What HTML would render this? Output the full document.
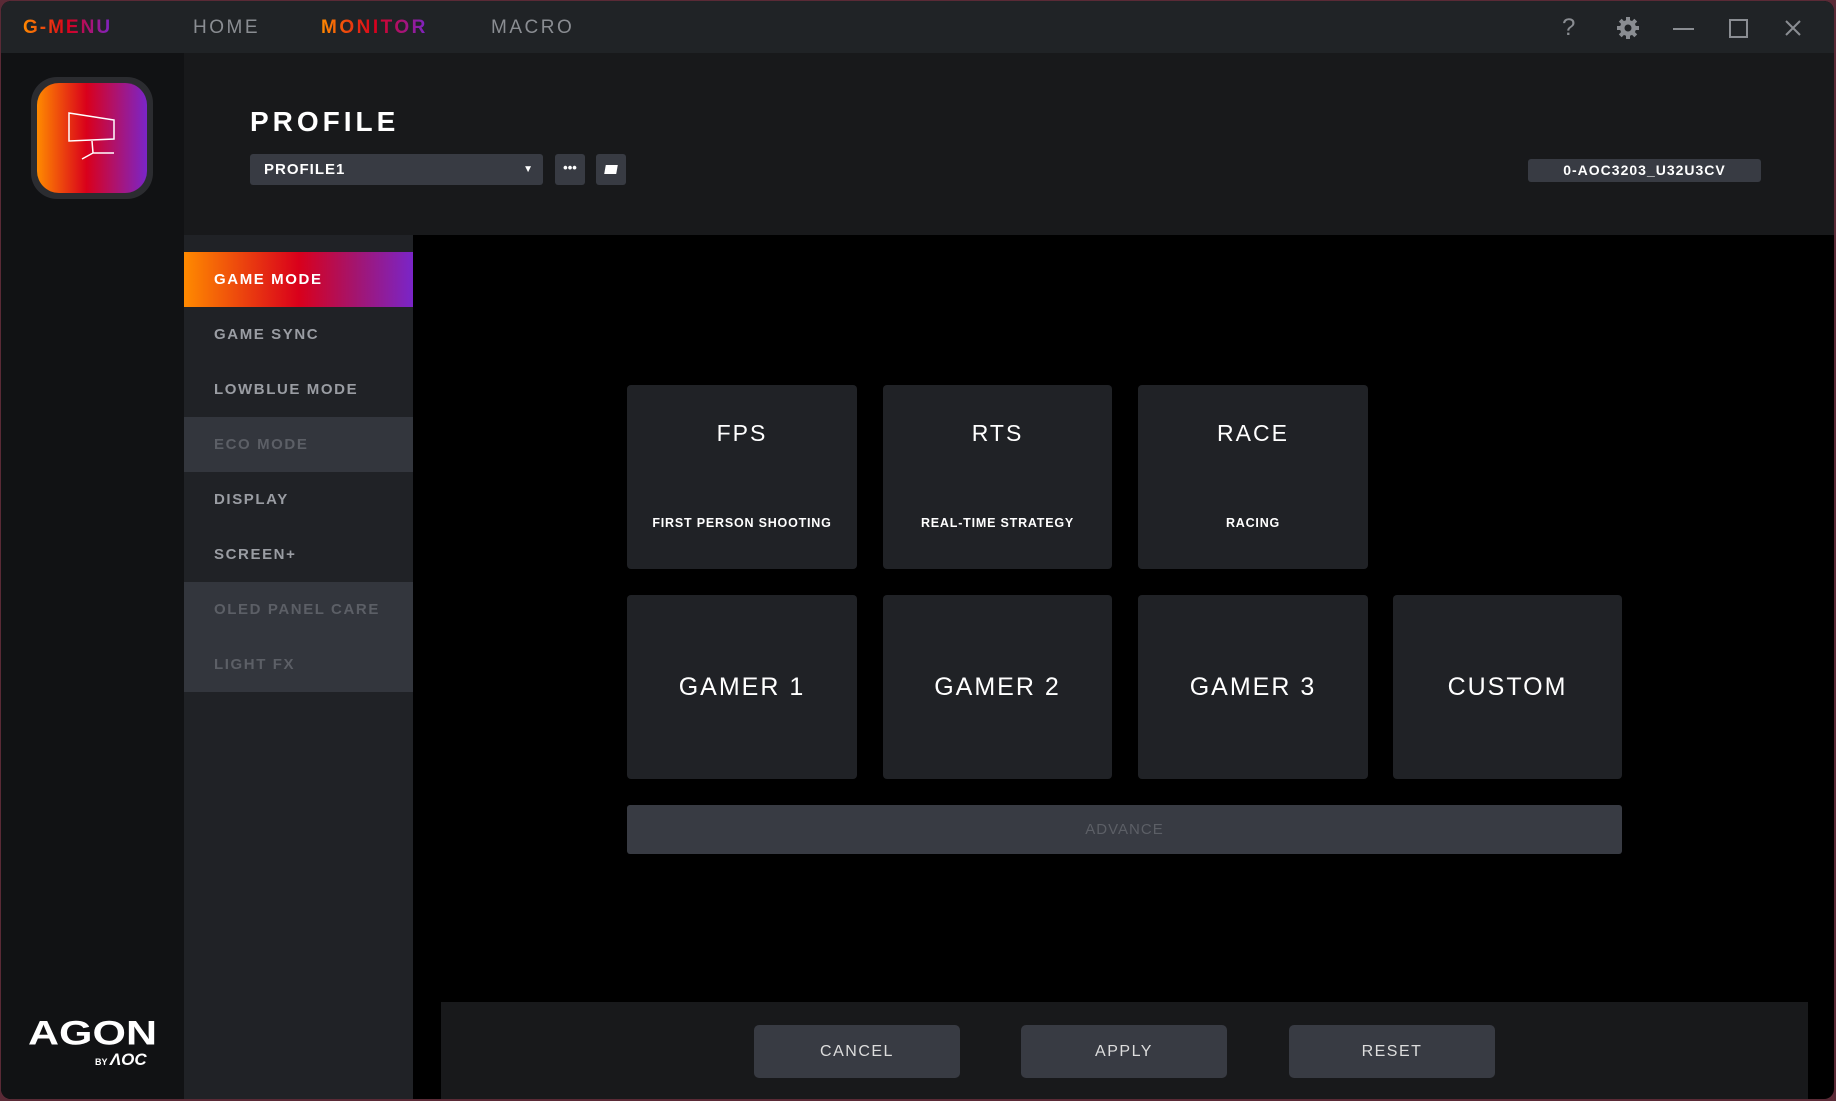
<!DOCTYPE html>
<html><head><meta charset="utf-8"><style>
*{margin:0;padding:0;box-sizing:border-box}
body{width:1836px;height:1101px;background:#5a2a36;overflow:hidden;font-family:"Liberation Sans",sans-serif}
.win{position:absolute;left:1px;top:1px;width:1833px;height:1098px;background:#000;border-radius:10px;overflow:hidden}
.abs{position:absolute}
.title{left:0;top:0;width:1836px;height:52px;background:#202326}
.nav{top:16px;font-size:19px;letter-spacing:2.5px;color:#8a8d92}
.grad{background:linear-gradient(90deg,#ff8a00,#d9001b 50%,#7a25c8);-webkit-background-clip:text;background-clip:text;color:transparent;font-weight:bold}
.side{left:0;top:52px;width:183px;height:1050px;background:#111214}
.hdr{left:183px;top:52px;width:1654px;height:182px;background:#18191b}
.menu{left:183px;top:234px;width:229px;height:870px;background:#202226}
.item{position:absolute;left:0;width:229px;height:55px;line-height:55px;padding-left:30px;font-size:15px;font-weight:bold;letter-spacing:1.6px;color:#9a9da3}
.dis{background:#33363d;color:#5c5f66}
.card{position:absolute;background:#202226;border-radius:4px;color:#fff;text-align:center}
.ct{position:absolute;left:0;right:0;top:35px;font-size:23px;letter-spacing:2px}
.cs{position:absolute;left:0;right:0;top:131px;font-size:12.5px;font-weight:bold;letter-spacing:0.8px}
.cg{line-height:184px;font-size:25px;letter-spacing:2px}
.btn{position:absolute;top:1024px;width:206px;height:53px;background:#383b43;border-radius:5px;color:#ddd;font-size:16px;letter-spacing:1.5px;text-align:center;line-height:53px}
</style></head><body><div class="win">
<div class="abs title"></div>
<div class="abs nav grad" style="left:22px;letter-spacing:2px">G-MENU</div>
<div class="abs nav" style="left:192px">HOME</div>
<div class="abs nav grad" style="left:320px">MONITOR</div>
<div class="abs nav" style="left:490px">MACRO</div>
<div class="abs" style="left:1561px;top:13px;color:#8a8d92;font-size:24px">?</div>
<svg class="abs" style="left:1615px;top:15px" width="24" height="24" viewBox="0 0 24 24"><g fill="#8a8d92"><circle cx="12" cy="12" r="8"/><g id="t"><rect x="10" y="1" width="4" height="5"/><rect x="10" y="18" width="4" height="5"/></g><use href="#t" transform="rotate(45 12 12)"/><use href="#t" transform="rotate(90 12 12)"/><use href="#t" transform="rotate(135 12 12)"/></g><circle cx="12" cy="12" r="3.5" fill="#202326"/></svg>
<div class="abs" style="left:1672px;top:27px;width:21px;height:2px;background:#8a8d92"></div>
<div class="abs" style="left:1728px;top:18px;width:19px;height:19px;border:2px solid #8a8d92"></div>
<svg class="abs" style="left:1783px;top:18px" width="18" height="18"><path d="M2 2L16 16M16 2L2 16" stroke="#8a8d92" stroke-width="2"/></svg>
<div class="abs side"></div>
<div class="abs" style="left:30px;top:76px;width:122px;height:122px;border-radius:26px;background:#2b2c30"></div>
<div class="abs" style="left:36px;top:82px;width:110px;height:110px;border-radius:22px;background:linear-gradient(90deg,#ff8a00,#d9001b 45%,#b0126a 70%,#7a25c8)"></div>
<svg class="abs" style="left:36px;top:82px" width="110" height="110"><g fill="none" stroke="#fff" stroke-width="1.5"><path d="M32 30L77 37V56L32 58Z"/><path d="M55 58L56 70L45 76M56 70L77 70"/></g></svg>
<div class="abs" style="left:27px;top:1013px;color:#fff;font-size:43px;font-weight:bold;letter-spacing:0px;transform:scaleY(0.8);transform-origin:left top">AGON</div>
<div class="abs" style="left:94px;top:1049px;color:#fff;font-size:9px;font-weight:bold">BY <span style="font-size:17px;font-style:italic">ΛOC</span></div>
<div class="abs hdr"></div>
<div class="abs" style="left:249px;top:105px;color:#fff;font-size:28px;font-weight:900;letter-spacing:4px">PROFILE</div>
<div class="abs" style="left:249px;top:153px;width:293px;height:31px;background:#383b43;border-radius:3px;color:#fff;font-size:15px;font-weight:bold;letter-spacing:1px;line-height:31px;padding-left:14px">PROFILE1<span style="position:absolute;right:9px;font-size:10px">▼</span></div>
<div class="abs" style="left:554px;top:153px;width:30px;height:31px;background:#383b43;border-radius:3px;color:#fff;font-size:13px;text-align:center;line-height:27px;font-weight:bold">•••</div>
<div class="abs" style="left:595px;top:153px;width:30px;height:31px;background:#383b43;border-radius:3px"><div style="position:absolute;left:9px;top:11px;width:12px;height:9px;background:#fff;transform:skewX(-10deg)"></div></div>
<div class="abs" style="left:1527px;top:158px;width:233px;height:23px;background:#383b43;border-radius:3px;color:#fff;font-size:14px;font-weight:bold;letter-spacing:1px;text-align:center;line-height:23px">0-AOC3203_U32U3CV</div>
<div class="abs menu"></div>
<div class="abs" style="left:183px;top:251px;width:229px">
<div class="item" style="top:0;color:#fff;background:linear-gradient(90deg,#ff8a00,#d9001b 50%,#a3156f 75%,#7a25c8)">GAME MODE</div>
<div class="item" style="top:55px">GAME SYNC</div>
<div class="item" style="top:110px">LOWBLUE MODE</div>
<div class="item dis" style="top:165px">ECO MODE</div>
<div class="item" style="top:220px">DISPLAY</div>
<div class="item" style="top:275px">SCREEN+</div>
<div class="item dis" style="top:330px">OLED PANEL CARE</div>
<div class="item dis" style="top:385px">LIGHT FX</div>
</div>
<div class="card" style="left:626px;top:384px;width:230px;height:184px"><div class="ct">FPS</div><div class="cs">FIRST PERSON SHOOTING</div></div>
<div class="card" style="left:882px;top:384px;width:229px;height:184px"><div class="ct">RTS</div><div class="cs">REAL-TIME STRATEGY</div></div>
<div class="card" style="left:1137px;top:384px;width:230px;height:184px"><div class="ct">RACE</div><div class="cs">RACING</div></div>
<div class="card cg" style="left:626px;top:594px;width:230px;height:184px">GAMER 1</div>
<div class="card cg" style="left:882px;top:594px;width:229px;height:184px">GAMER 2</div>
<div class="card cg" style="left:1137px;top:594px;width:230px;height:184px">GAMER 3</div>
<div class="card cg" style="left:1392px;top:594px;width:229px;height:184px">CUSTOM</div>
<div class="abs" style="left:626px;top:804px;width:995px;height:49px;background:#383b43;border-radius:3px;color:#5c5f66;font-size:15px;letter-spacing:1px;text-align:center;line-height:49px">ADVANCE</div>
<div class="abs" style="left:440px;top:1001px;width:1367px;height:100px;background:#18191b"></div>
<div class="btn" style="left:753px">CANCEL</div>
<div class="btn" style="left:1020px">APPLY</div>
<div class="btn" style="left:1288px">RESET</div>
</div></body></html>
